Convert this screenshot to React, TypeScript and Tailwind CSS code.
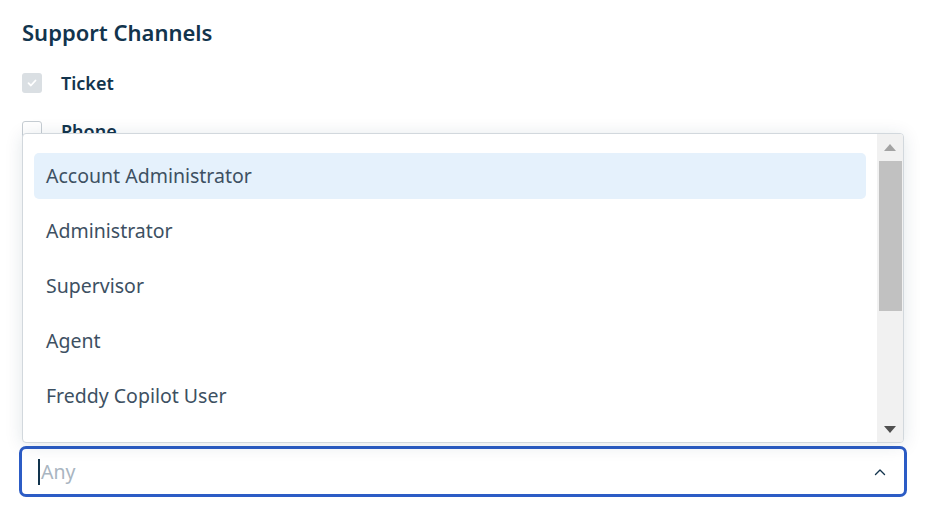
import React from "react";

const roles = [
  "Account Administrator",
  "Administrator",
  "Supervisor",
  "Agent",
  "Freddy Copilot User",
  "Field Technician",
];

const channels = [
  { name: "Ticket", checked: true },
  { name: "Phone", checked: false },
  { name: "Chat", checked: false },
  { name: "Email", checked: false },
  { name: "Social", checked: false },
  { name: "Portal", checked: false },
  { name: "Forums", checked: false },
  { name: "Feedback Widget", checked: false },
];

function Check({ checked }: { checked: boolean }) {
  if (checked) {
    return (
      <span className="flex h-5 w-5 items-center justify-center rounded-[3px] bg-[#dadfe3]">
        <svg width="12" height="12" viewBox="0 0 12 12" fill="none">
          <path d="M2.5 6.2l2.4 2.3 4.6-5" stroke="#fff" strokeWidth="1.8" strokeLinecap="round" strokeLinejoin="round" />
        </svg>
      </span>
    );
  }
  return <span className="h-5 w-5 rounded-[3px] border border-[#c6cdd3] bg-white" />;
}

export default function App() {
  return (
    <div
      className="h-[522px] w-[951px] overflow-hidden bg-white text-[#12344d]"
      style={{ fontFamily: '"Noto Sans", "Open Sans", sans-serif' }}
    >
      <div className="pl-[22px] pt-[17px]">
        <h2 className="text-[22px] font-semibold leading-[30px]">Support Channels</h2>
        <div className="mt-[26px] flex flex-col gap-[28px]">
          {channels.map((c) => (
            <label key={c.name} className="flex h-5 items-center gap-[19px]">
              <Check checked={c.checked} />
              <span className="text-[18px] font-semibold">{c.name}</span>
            </label>
          ))}
        </div>
      </div>

      <div className="relative ml-[19px] mt-[17px] w-[888px]">
        {/* dropdown menu */}
        <div className="absolute bottom-full left-[3px] mb-[3px] flex h-[310px] w-[882px] overflow-hidden rounded-[4px] border border-[#d2d8dd] bg-white shadow-[0_2px_18px_rgba(18,52,77,0.12)]">
          <ul className="flex-1 px-[11px] pt-[19px]">
            {roles.map((r, i) => (
              <li
                key={r}
                className={
                  "mb-[9px] flex h-[46px] items-center rounded-[5px] px-[12px] text-[19.5px] text-[#3d5062] " +
                  (i === 0 ? "bg-[#e5f1fc]" : "")
                }
              >
                {r}
              </li>
            ))}
          </ul>
          <div className="flex w-[26px] flex-col items-center bg-[#f1f1f1]">
            <div className="flex h-[27px] items-center justify-center">
              <span className="h-0 w-0 border-x-[6px] border-b-[7px] border-x-transparent border-b-[#a3a3a3]" />
            </div>
            <div className="h-[150px] w-[23px] bg-[#c1c1c1]" />
            <div className="flex-1" />
            <div className="flex h-[26px] items-center justify-center">
              <span className="h-0 w-0 border-x-[6px] border-t-[7px] border-x-transparent border-t-[#505050]" />
            </div>
          </div>
        </div>

        {/* input */}
        <div className="flex h-[51px] items-center rounded-[7px] border-[3px] border-[#2c5cc5] bg-white pl-[16px] pr-[18px]">
          <span className="mr-[1px] h-[26px] w-[2px] bg-[#12344d]" />
          <span className="flex-1 text-[19.5px] text-[#a9b5c1]">Any</span>
          <svg width="12" height="8" viewBox="0 0 12 8" fill="none">
            <path d="M1.5 6.5L6 2l4.5 4.5" stroke="#12344d" strokeWidth="1.4" strokeLinecap="round" strokeLinejoin="round" />
          </svg>
        </div>
      </div>
    </div>
  );
}
